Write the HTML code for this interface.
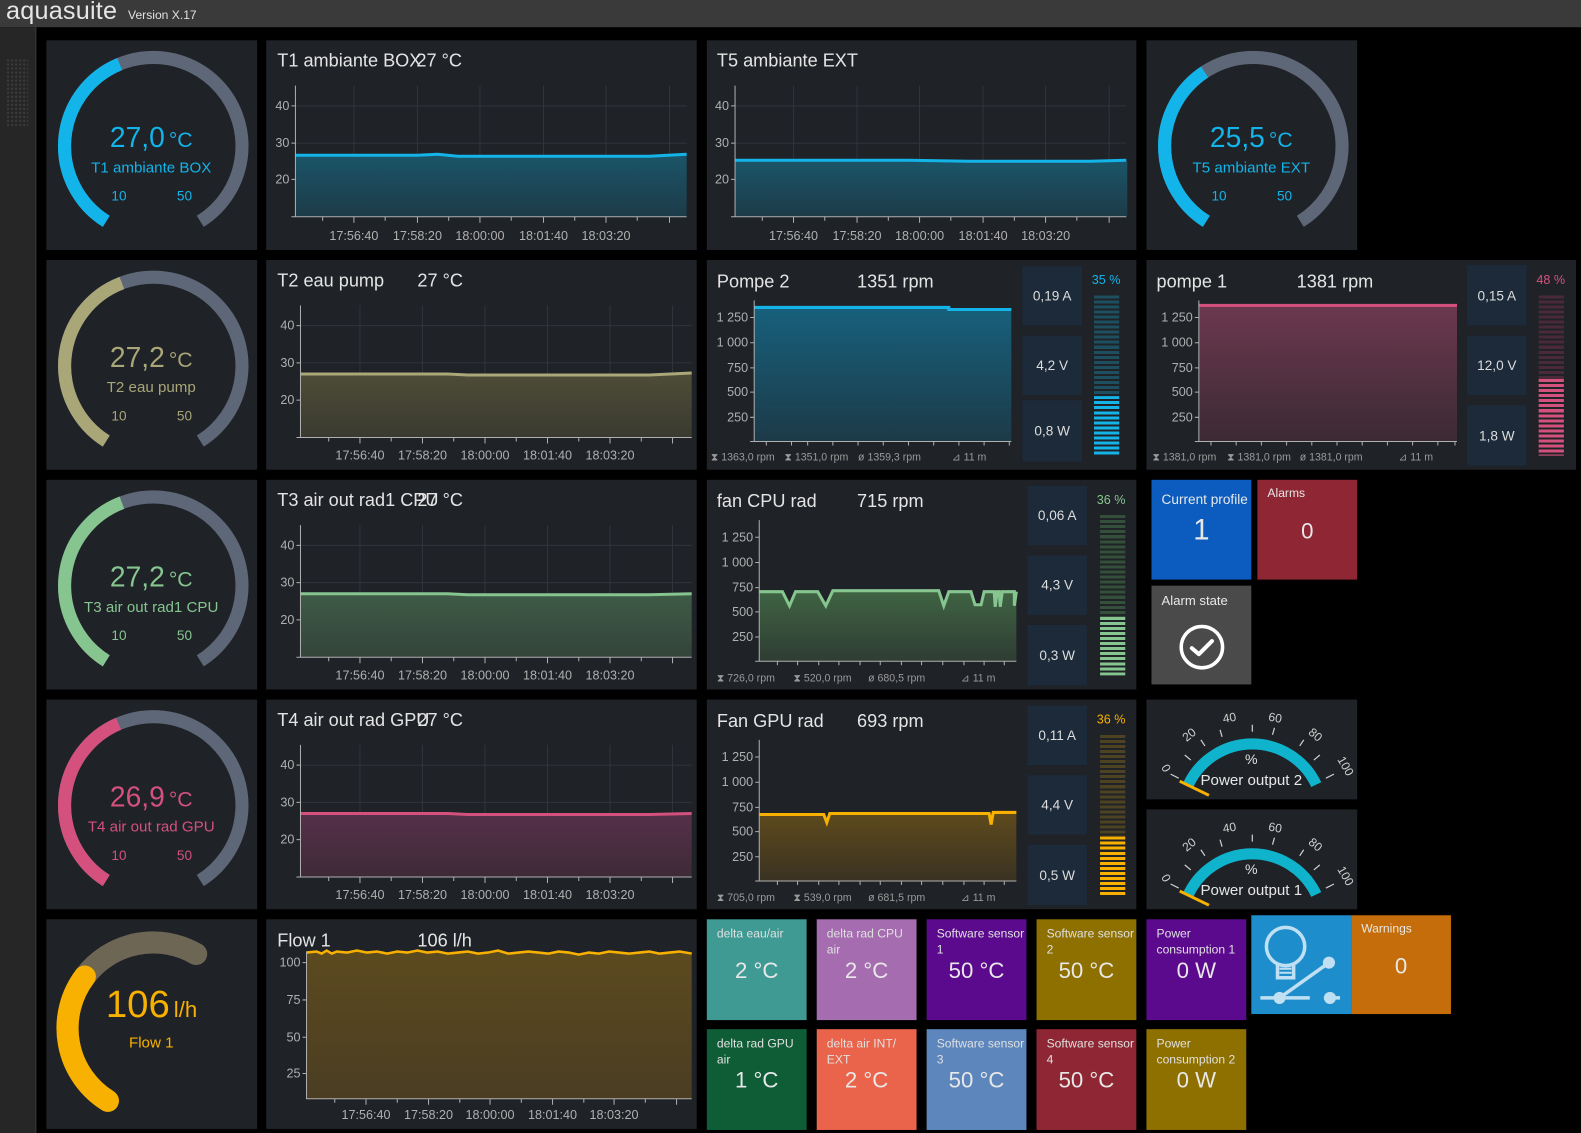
<!DOCTYPE html>
<html><head><meta charset="utf-8"><style>
html,body{margin:0;padding:0;background:#000;width:1581px;height:1133px;overflow:hidden}
body{font-family:"Liberation Sans",sans-serif;}
#w{position:absolute;left:0;top:0;width:1568px;height:1124px;transform:scale(1.0083,1.008);transform-origin:0 0}
.a{position:absolute}
.p{position:absolute;background:#1f2227;overflow:hidden}
svg text{font-family:"Liberation Sans",sans-serif}
.t{fill:#e4e4e4;font-size:18px}
.l{fill:#b0b0b0;font-size:12.5px}
.f{fill:#9a9a9a;font-size:10.5px}
.bx{position:absolute;background:#1c2a3a;color:#ddd;font-size:13.5px;display:flex;align-items:center;justify-content:center}
.tile{position:absolute;color:#e8e8e8;overflow:hidden}
.tile .n{position:absolute;left:10px;top:6px;font-size:12px;line-height:16px;color:#e0e0e0;right:2px}
.tile .v{position:absolute;left:0;right:0;text-align:center;font-size:22px}
</style></head><body>
<div id="w">
<!-- header -->
<div class="a" style="left:0;top:0;width:1568px;height:27px;background:#3a3a3a"></div>
<div class="a" style="left:6px;top:-3px;font-size:25px;color:#e6e6e6;letter-spacing:0.2px">aquasuite</div>
<div class="a" style="left:127px;top:8px;font-size:12px;color:#e0e0e0">Version X.17</div>
<div class="a" style="left:0;top:27px;width:35px;height:1097px;background:#262626;border-right:1px solid #3a3a3a"></div>
<div class="a" style="left:6px;top:58px;width:22px;height:68px;background:radial-gradient(circle,#3a3a3a 1px,transparent 1.4px) 0 0/4px 4px"></div>

<svg width="0" height="0" style="position:absolute"><defs>
<linearGradient id="gb" x1="0" y1="0" x2="0" y2="1"><stop offset="0" stop-color="#1b5569"/><stop offset="1" stop-color="#1c3b48"/></linearGradient>
<linearGradient id="go" x1="0" y1="0" x2="0" y2="1"><stop offset="0" stop-color="#4e4d38"/><stop offset="1" stop-color="#3a3a30"/></linearGradient>
<linearGradient id="gg" x1="0" y1="0" x2="0" y2="1"><stop offset="0" stop-color="#3e5b46"/><stop offset="1" stop-color="#34443a"/></linearGradient>
<linearGradient id="gp" x1="0" y1="0" x2="0" y2="1"><stop offset="0" stop-color="#56304a"/><stop offset="1" stop-color="#3e2a36"/></linearGradient>
<linearGradient id="gy" x1="0" y1="0" x2="0" y2="1"><stop offset="0" stop-color="#5c4a1f"/><stop offset="1" stop-color="#4a3d22"/></linearGradient>
<linearGradient id="gb2" x1="0" y1="0" x2="0" y2="1"><stop offset="0" stop-color="#17607c"/><stop offset="1" stop-color="#1c3a48"/></linearGradient>
<linearGradient id="gp2" x1="0" y1="0" x2="0" y2="1"><stop offset="0" stop-color="#6c384f"/><stop offset="1" stop-color="#3b2a33"/></linearGradient>
<linearGradient id="gg2" x1="0" y1="0" x2="0" y2="1"><stop offset="0" stop-color="#3f6443"/><stop offset="1" stop-color="#2f3d33"/></linearGradient>
<linearGradient id="gy2" x1="0" y1="0" x2="0" y2="1"><stop offset="0" stop-color="#5e4a1c"/><stop offset="1" stop-color="#3a3222"/></linearGradient>
</defs></svg>

<!-- ===== ROW 1 ===== -->
<div class="p" style="left:46px;top:40px;width:209px;height:208px">
<svg width="209" height="208"><path d="M59.4 179.6A88 88 0 1 1 152.6 179.6" fill="none" stroke="#5e6777" stroke-width="13"/><path d="M59.4 179.6A88 88 0 0 1 72.7 23.5" fill="none" stroke="#12b4ea" stroke-width="13"/>
<text x="104" y="106" text-anchor="middle" fill="#12b4ea" font-size="28">27,0<tspan font-size="21" dx="4">°C</tspan></text>
<text x="104" y="131" text-anchor="middle" fill="#12b4ea" font-size="15">T1 ambiante BOX</text>
<text x="72" y="159" text-anchor="middle" fill="#12b4ea" font-size="13.5">10</text><text x="137" y="159" text-anchor="middle" fill="#12b4ea" font-size="13.5">50</text></svg></div>

<div class="p" style="left:264px;top:40px;width:427px;height:208px">
<svg width="427" height="208"><text x="11" y="26" class="t">T1 ambiante BOX</text><text x="149" y="26" class="t">27 °C</text>
<g stroke="#30353b"><path d="M29 65H417M29 102H417M29 138H417M87 45V175M150 45V175M212 45V175M275 45V175M337 45V175M400 45V175"/></g>
<path d="M29 114H150L170 113L190 115H380L417 113V175H29Z" fill="url(#gb)"/><path d="M29 114H150L170 113L190 115H380L417 113" fill="none" stroke="#14b4e8" stroke-width="3"/>
<g stroke="#b0b0b0" fill="none"><path d="M29 45V175H417M25 65H29M25 102H29M25 138H29M25 175H29M56 175V179M87 175V181M118 175V179M150 175V181M181 175V179M212 175V181M243 175V179M275 175V181M306 175V179M337 175V181M368 175V179M400 175V181"/></g>
<g class="l" text-anchor="end"><text x="23" y="69">40</text><text x="23" y="106">30</text><text x="23" y="142">20</text></g>
<g class="l" text-anchor="middle"><text x="87" y="198">17:56:40</text><text x="150" y="198">17:58:20</text><text x="212" y="198">18:00:00</text><text x="275" y="198">18:01:40</text><text x="337" y="198">18:03:20</text></g></svg></div>

<div class="p" style="left:701px;top:40px;width:426px;height:208px">
<svg width="426" height="208"><text x="10" y="26" class="t">T5 ambiante EXT</text>
<g stroke="#30353b"><path d="M28 65H416M28 102H416M28 138H416M86 45V175M149 45V175M211 45V175M274 45V175M336 45V175M399 45V175"/></g>
<path d="M28 119H200L260 120H417V175H28Z" fill="url(#gb)"/><path d="M28 119H200L260 120H380L416 119" fill="none" stroke="#14b4e8" stroke-width="3"/>
<g stroke="#b0b0b0" fill="none"><path d="M28 45V175H416M24 65H28M24 102H28M24 138H28M24 175H28M55 175V179M86 175V181M117 175V179M149 175V181M180 175V179M211 175V181M242 175V179M274 175V181M305 175V179M336 175V181M367 175V179M399 175V181"/></g>
<g class="l" text-anchor="end"><text x="22" y="69">40</text><text x="22" y="106">30</text><text x="22" y="142">20</text></g>
<g class="l" text-anchor="middle"><text x="86" y="198">17:56:40</text><text x="149" y="198">17:58:20</text><text x="211" y="198">18:00:00</text><text x="274" y="198">18:01:40</text><text x="336" y="198">18:03:20</text></g></svg></div>

<div class="p" style="left:1137px;top:40px;width:209px;height:208px">
<svg width="209" height="208"><path d="M59.4 179.6A88 88 0 1 1 152.6 179.6" fill="none" stroke="#5e6777" stroke-width="13"/><path d="M59.4 179.6A88 88 0 0 1 57.7 31.4" fill="none" stroke="#12b4ea" stroke-width="13"/>
<text x="104" y="106" text-anchor="middle" fill="#12b4ea" font-size="28">25,5<tspan font-size="21" dx="4">°C</tspan></text>
<text x="104" y="131" text-anchor="middle" fill="#12b4ea" font-size="15">T5 ambiante EXT</text>
<text x="72" y="159" text-anchor="middle" fill="#12b4ea" font-size="13.5">10</text><text x="137" y="159" text-anchor="middle" fill="#12b4ea" font-size="13.5">50</text></svg></div>

<!-- ===== ROW 2 ===== -->
<div class="p" style="left:46px;top:258px;width:209px;height:208px">
<svg width="209" height="208"><path d="M59.4 179.6A88 88 0 1 1 152.6 179.6" fill="none" stroke="#5e6777" stroke-width="13"/><path d="M59.4 179.6A88 88 0 0 1 74.9 22.7" fill="none" stroke="#a9a678" stroke-width="13"/>
<text x="104" y="106" text-anchor="middle" fill="#a9a678" font-size="28">27,2<tspan font-size="21" dx="4">°C</tspan></text>
<text x="104" y="131" text-anchor="middle" fill="#a9a678" font-size="15">T2 eau pump</text>
<text x="72" y="159" text-anchor="middle" fill="#a9a678" font-size="13.5">10</text><text x="137" y="159" text-anchor="middle" fill="#a9a678" font-size="13.5">50</text></svg></div>

<div class="p" style="left:264px;top:258px;width:427px;height:208px">
<svg width="427" height="208"><text x="11" y="26" class="t">T2 eau pump</text><text x="150" y="26" class="t">27 °C</text>
<g stroke="#30353b"><path d="M34 65H422M34 102H422M34 139H422M93 45V176M155 45V176M217 45V176M279 45V176M341 45V176M403 45V176"/></g>
<path d="M34 113H180L200 114H380L422 112V176H34Z" fill="url(#go)"/><path d="M34 113H180L200 114H380L422 112" fill="none" stroke="#aaa878" stroke-width="3"/>
<g stroke="#b0b0b0" fill="none"><path d="M34 45V176H422M30 65H34M30 102H34M30 139H34M30 176H34M62 176V180M93 176V182M124 176V180M155 176V182M186 176V180M217 176V182M248 176V180M279 176V182M310 176V180M341 176V182M372 176V180M403 176V182"/></g>
<g class="l" text-anchor="end"><text x="28" y="69">40</text><text x="28" y="106">30</text><text x="28" y="143">20</text></g>
<g class="l" text-anchor="middle"><text x="93" y="198">17:56:40</text><text x="155" y="198">17:58:20</text><text x="217" y="198">18:00:00</text><text x="279" y="198">18:01:40</text><text x="341" y="198">18:03:20</text></g></svg></div>

<div class="p" style="left:701px;top:258px;width:426px;height:208px">
<svg width="426" height="208"><text x="10" y="27" class="t">Pompe 2</text><text x="149" y="27" class="t">1351 rpm</text>
<path d="M47 47H240V49H302V180H47Z" fill="url(#gb2)"/><path d="M47 47H240V49H302" fill="none" stroke="#14b4e8" stroke-width="3"/>
<g stroke="#b0b0b0" fill="none"><path d="M47 40V180H302M43 57H47M43 82H47M43 107H47M43 131H47M43 156H47M43 180H47M59 180V184M84 180V184M100 180V184M125 180V184M150 180V184M175 180V184M200 180V184M225 180V184M250 180V184M275 180V184M300 180V184"/></g>
<g class="l" text-anchor="end"><text x="41" y="61">1 250</text><text x="41" y="86">1 000</text><text x="41" y="111">750</text><text x="41" y="135">500</text><text x="41" y="160">250</text></g>
<g class="f"><text x="4" y="199">⧗ 1363,0 rpm</text><text x="77" y="199">⧗ 1351,0 rpm</text><text x="150" y="199">ø 1359,3 rpm</text><text x="243" y="199">⊿ 11 m</text></g>
<text x="396" y="24" fill="#12b4ea" font-size="12.5" text-anchor="middle">35 %</text></svg>
<div class="bx" style="left:313px;top:6px;width:59px;height:59px">0,19 A</div>
<div class="bx" style="left:313px;top:75px;width:59px;height:59px">4,2 V</div>
<div class="bx" style="left:313px;top:139px;width:59px;height:61px">0,8 W</div>
<div class="a" style="left:384px;top:35px;width:25px;height:100px;background:repeating-linear-gradient(#1e4f60 0 3px,transparent 3px 5px)"></div>
<div class="a" style="left:384px;top:135px;width:25px;height:59px;background:repeating-linear-gradient(#14b4e8 0 3px,transparent 3px 5px)"></div>
</div>

<div class="p" style="left:1137px;top:258px;width:426px;height:208px">
<svg width="426" height="208"><text x="10" y="27" class="t">pompe 1</text><text x="149" y="27" class="t">1381 rpm</text>
<path d="M52 45H308V180H52Z" fill="url(#gp2)"/><path d="M52 45H308" fill="none" stroke="#d4517d" stroke-width="3"/>
<g stroke="#b0b0b0" fill="none"><path d="M52 40V180H308M48 57H52M48 82H52M48 107H52M48 131H52M48 156H52M48 180H52M64 180V184M89 180V184M114 180V184M139 180V184M164 180V184M189 180V184M214 180V184M239 180V184M264 180V184M289 180V184M306 180V184"/></g>
<g class="l" text-anchor="end"><text x="46" y="61">1 250</text><text x="46" y="86">1 000</text><text x="46" y="111">750</text><text x="46" y="135">500</text><text x="46" y="160">250</text></g>
<g class="f"><text x="6" y="199">⧗ 1381,0 rpm</text><text x="80" y="199">⧗ 1381,0 rpm</text><text x="152" y="199">ø 1381,0 rpm</text><text x="250" y="199">⊿ 11 m</text></g>
<text x="401" y="24" fill="#d4517d" font-size="12.5" text-anchor="middle">48 %</text></svg>
<div class="bx" style="left:318px;top:5px;width:59px;height:60px">0,15 A</div>
<div class="bx" style="left:318px;top:75px;width:59px;height:59px">12,0 V</div>
<div class="bx" style="left:318px;top:144px;width:59px;height:60px">1,8 W</div>
<div class="a" style="left:389px;top:35px;width:25px;height:83px;background:repeating-linear-gradient(#4a2a38 0 3px,transparent 3px 5px)"></div>
<div class="a" style="left:389px;top:118px;width:25px;height:76px;background:repeating-linear-gradient(#d4517d 0 3px,transparent 3px 5px)"></div>
</div>

<!-- ===== ROW 3 ===== -->
<div class="p" style="left:46px;top:476px;width:209px;height:208px">
<svg width="209" height="208"><path d="M59.4 179.6A88 88 0 1 1 152.6 179.6" fill="none" stroke="#5e6777" stroke-width="13"/><path d="M59.4 179.6A88 88 0 0 1 74.9 22.7" fill="none" stroke="#86c58f" stroke-width="13"/>
<text x="104" y="106" text-anchor="middle" fill="#86c58f" font-size="28">27,2<tspan font-size="21" dx="4">°C</tspan></text>
<text x="104" y="131" text-anchor="middle" fill="#86c58f" font-size="15">T3 air out rad1 CPU</text>
<text x="72" y="159" text-anchor="middle" fill="#86c58f" font-size="13.5">10</text><text x="137" y="159" text-anchor="middle" fill="#86c58f" font-size="13.5">50</text></svg></div>

<div class="p" style="left:264px;top:476px;width:427px;height:208px">
<svg width="427" height="208"><text x="11" y="26" class="t">T3 air out rad1 CPU</text><text x="150" y="26" class="t">27 °C</text>
<g stroke="#30353b"><path d="M34 65H422M34 102H422M34 139H422M93 45V176M155 45V176M217 45V176M279 45V176M341 45V176M403 45V176"/></g>
<path d="M34 113H180L200 114H380L422 113V176H34Z" fill="url(#gg)"/><path d="M34 113H180L200 114H380L422 113" fill="none" stroke="#86c58f" stroke-width="3"/>
<g stroke="#b0b0b0" fill="none"><path d="M34 45V176H422M30 65H34M30 102H34M30 139H34M30 176H34M62 176V180M93 176V182M124 176V180M155 176V182M186 176V180M217 176V182M248 176V180M279 176V182M310 176V180M341 176V182M372 176V180M403 176V182"/></g>
<g class="l" text-anchor="end"><text x="28" y="69">40</text><text x="28" y="106">30</text><text x="28" y="143">20</text></g>
<g class="l" text-anchor="middle"><text x="93" y="198">17:56:40</text><text x="155" y="198">17:58:20</text><text x="217" y="198">18:00:00</text><text x="279" y="198">18:01:40</text><text x="341" y="198">18:03:20</text></g></svg></div>

<div class="p" style="left:701px;top:476px;width:426px;height:208px">
<svg width="426" height="208"><text x="10" y="27" class="t">fan CPU rad</text><text x="149" y="27" class="t">715 rpm</text>
<path d="M52 111H75L82 125L88 111H110L118 125L125 110H230L235 125L240 111H262L266 124H272L275 111H285L286 126L288 111H290L291 126L293 111H305L305 125L307 111V180H52Z" fill="url(#gg2)"/>
<path d="M52 111H75L82 125L88 111H110L118 125L125 110H230L235 125L240 111H262L266 124H272L275 111H285L286 126L288 111H290L291 126L293 111H305L305 125L307 111" fill="none" stroke="#86c58f" stroke-width="3"/>
<g stroke="#b0b0b0" fill="none"><path d="M52 40V180H307M48 57H52M48 82H52M48 107H52M48 131H52M48 156H52M48 180H52M70 180V184M90 180V184M111 180V184M131 180V184M152 180V184M172 180V184M193 180V184M213 180V184M234 180V184M255 180V184M275 180V184M295 180V184"/></g>
<g class="l" text-anchor="end"><text x="46" y="61">1 250</text><text x="46" y="86">1 000</text><text x="46" y="111">750</text><text x="46" y="135">500</text><text x="46" y="160">250</text></g>
<g class="f"><text x="10" y="200">⧗ 726,0 rpm</text><text x="86" y="200">⧗ 520,0 rpm</text><text x="160" y="200">ø 680,5 rpm</text><text x="252" y="200">⊿ 11 m</text></g>
<text x="401" y="24" fill="#86c58f" font-size="12.5" text-anchor="middle">36 %</text></svg>
<div class="bx" style="left:318px;top:6px;width:59px;height:59px">0,06 A</div>
<div class="bx" style="left:318px;top:75px;width:59px;height:59px">4,3 V</div>
<div class="bx" style="left:318px;top:144px;width:59px;height:60px">0,3 W</div>
<div class="a" style="left:390px;top:35px;width:25px;height:101px;background:repeating-linear-gradient(#35503a 0 3px,transparent 3px 5px)"></div>
<div class="a" style="left:390px;top:136px;width:25px;height:58px;background:repeating-linear-gradient(#86c58f 0 3px,transparent 3px 5px)"></div>
</div>

<div class="tile" style="left:1142px;top:476px;width:99px;height:99px;background:#0b5cbe"><div class="a" style="left:10px;top:12px;font-size:13.5px">Current profile</div><div class="v" style="top:34px;font-size:29px">1</div></div>
<div class="tile" style="left:1247px;top:476px;width:99px;height:99px;background:#8e2633"><div class="a" style="left:10px;top:6px;font-size:12px">Alarms</div><div class="v" style="top:38px;font-size:22px">0</div></div>
<div class="tile" style="left:1142px;top:581px;width:99px;height:98px;background:#4a4a4a"><div class="a" style="left:10px;top:7px;font-size:13px">Alarm state</div>
<svg class="a" style="left:25px;top:36px" width="50" height="50"><circle cx="25" cy="25" r="20.5" fill="none" stroke="#fff" stroke-width="3.5"/><path d="M15 26L22 32L35 19" fill="none" stroke="#fff" stroke-width="4" stroke-linecap="round" stroke-linejoin="round"/></svg></div>

<!-- ===== ROW 4 ===== -->
<div class="p" style="left:46px;top:694px;width:209px;height:208px">
<svg width="209" height="208"><path d="M59.4 179.6A88 88 0 1 1 152.6 179.6" fill="none" stroke="#5e6777" stroke-width="13"/><path d="M59.4 179.6A88 88 0 0 1 71.6 24" fill="none" stroke="#d4517d" stroke-width="13"/>
<text x="104" y="106" text-anchor="middle" fill="#d4517d" font-size="28">26,9<tspan font-size="21" dx="4">°C</tspan></text>
<text x="104" y="131" text-anchor="middle" fill="#d4517d" font-size="15">T4 air out rad GPU</text>
<text x="72" y="159" text-anchor="middle" fill="#d4517d" font-size="13.5">10</text><text x="137" y="159" text-anchor="middle" fill="#d4517d" font-size="13.5">50</text></svg></div>

<div class="p" style="left:264px;top:694px;width:427px;height:208px">
<svg width="427" height="208"><text x="11" y="26" class="t">T4 air out rad GPU</text><text x="150" y="26" class="t">27 °C</text>
<g stroke="#30353b"><path d="M34 65H422M34 102H422M34 139H422M93 45V176M155 45V176M217 45V176M279 45V176M341 45V176M403 45V176"/></g>
<path d="M34 113H180L200 114H380L422 113V176H34Z" fill="url(#gp)"/><path d="M34 113H180L200 114H380L422 113" fill="none" stroke="#d4517d" stroke-width="3"/>
<g stroke="#b0b0b0" fill="none"><path d="M34 45V176H422M30 65H34M30 102H34M30 139H34M30 176H34M62 176V180M93 176V182M124 176V180M155 176V182M186 176V180M217 176V182M248 176V180M279 176V182M310 176V180M341 176V182M372 176V180M403 176V182"/></g>
<g class="l" text-anchor="end"><text x="28" y="69">40</text><text x="28" y="106">30</text><text x="28" y="143">20</text></g>
<g class="l" text-anchor="middle"><text x="93" y="198">17:56:40</text><text x="155" y="198">17:58:20</text><text x="217" y="198">18:00:00</text><text x="279" y="198">18:01:40</text><text x="341" y="198">18:03:20</text></g></svg></div>

<div class="p" style="left:701px;top:694px;width:426px;height:208px">
<svg width="426" height="208"><text x="10" y="27" class="t">Fan GPU rad</text><text x="149" y="27" class="t">693 rpm</text>
<path d="M52 114H116L119 122L122 113H280L282 124L284 112H307V180H52Z" fill="url(#gy2)"/>
<path d="M52 114H116L119 122L122 113H280L282 124L284 112H307" fill="none" stroke="#f8b100" stroke-width="3"/>
<g stroke="#b0b0b0" fill="none"><path d="M52 40V180H307M48 57H52M48 82H52M48 107H52M48 131H52M48 156H52M48 180H52M70 180V184M90 180V184M111 180V184M131 180V184M152 180V184M172 180V184M193 180V184M213 180V184M234 180V184M255 180V184M275 180V184M295 180V184"/></g>
<g class="l" text-anchor="end"><text x="46" y="61">1 250</text><text x="46" y="86">1 000</text><text x="46" y="111">750</text><text x="46" y="135">500</text><text x="46" y="160">250</text></g>
<g class="f"><text x="10" y="200">⧗ 705,0 rpm</text><text x="86" y="200">⧗ 539,0 rpm</text><text x="160" y="200">ø 681,5 rpm</text><text x="252" y="200">⊿ 11 m</text></g>
<text x="401" y="24" fill="#f8b100" font-size="12.5" text-anchor="middle">36 %</text></svg>
<div class="bx" style="left:318px;top:6px;width:59px;height:59px">0,11 A</div>
<div class="bx" style="left:318px;top:75px;width:59px;height:59px">4,4 V</div>
<div class="bx" style="left:318px;top:144px;width:59px;height:60px">0,5 W</div>
<div class="a" style="left:390px;top:35px;width:25px;height:101px;background:repeating-linear-gradient(#4d4222 0 3px,transparent 3px 5px)"></div>
<div class="a" style="left:390px;top:136px;width:25px;height:58px;background:repeating-linear-gradient(#f8b100 0 3px,transparent 3px 5px)"></div>
</div>

<!-- power output gauges -->
<div class="p" style="left:1137px;top:694px;width:209px;height:99px">
<svg width="209" height="99"><path d="M41.6 84.4A70 70 0 0 1 168.4 84.4" fill="none" stroke="#0fb3cc" stroke-width="11"/>
<g stroke="#cfcfcf" stroke-width="1.2"><path d="M24 74L32 78M38 55L44 60M54 40L58 46M73 30L75 37M105 25V32M127 28L125 35M156 40L152 46M172 55L166 60M186 74L178 78"/></g>
<path d="M33 81L62 95" stroke="#f8b100" stroke-width="3"/>
<g fill="#cfcfcf" font-size="12" text-anchor="middle"><text x="16" y="70" transform="rotate(60 16 70)">0</text><text x="45" y="38" transform="rotate(-40 45 38)">20</text><text x="83" y="22" transform="rotate(-10 83 22)">40</text><text x="127" y="22" transform="rotate(10 127 22)">60</text><text x="165" y="38" transform="rotate(40 165 38)">80</text><text x="194" y="68" transform="rotate(60 194 68)">100</text></g>
<text x="104" y="64" fill="#e0e0e0" font-size="14" text-anchor="middle">%</text>
<text x="104" y="85" fill="#e6e6e6" font-size="15" text-anchor="middle">Power output 2</text></svg></div>
<div class="p" style="left:1137px;top:803px;width:209px;height:99px">
<svg width="209" height="99"><path d="M41.6 84.4A70 70 0 0 1 168.4 84.4" fill="none" stroke="#0fb3cc" stroke-width="11"/>
<g stroke="#cfcfcf" stroke-width="1.2"><path d="M24 74L32 78M38 55L44 60M54 40L58 46M73 30L75 37M105 25V32M127 28L125 35M156 40L152 46M172 55L166 60M186 74L178 78"/></g>
<path d="M33 81L62 95" stroke="#f8b100" stroke-width="3"/>
<g fill="#cfcfcf" font-size="12" text-anchor="middle"><text x="16" y="70" transform="rotate(60 16 70)">0</text><text x="45" y="38" transform="rotate(-40 45 38)">20</text><text x="83" y="22" transform="rotate(-10 83 22)">40</text><text x="127" y="22" transform="rotate(10 127 22)">60</text><text x="165" y="38" transform="rotate(40 165 38)">80</text><text x="194" y="68" transform="rotate(60 194 68)">100</text></g>
<text x="104" y="64" fill="#e0e0e0" font-size="14" text-anchor="middle">%</text>
<text x="104" y="85" fill="#e6e6e6" font-size="15" text-anchor="middle">Power output 1</text></svg></div>

<!-- ===== ROW 5 ===== -->
<div class="p" style="left:46px;top:912px;width:209px;height:208px">
<svg width="209" height="208"><path d="M38.1 56.8A85 85 0 0 1 148.5 34.4" fill="none" stroke="#6d6655" stroke-width="22" stroke-linecap="round"/><path d="M61 180.1A85 85 0 0 1 38.1 56.8" fill="none" stroke="#f8b100" stroke-width="22" stroke-linecap="round"/>
<text x="59" y="97" fill="#f8b100" font-size="38">106<tspan font-size="22" dx="4">l/h</tspan></text>
<text x="104" y="127" text-anchor="middle" fill="#f8b100" font-size="15">Flow 1</text></svg></div>

<div class="p" style="left:264px;top:912px;width:427px;height:208px">
<svg width="427" height="208"><text x="11" y="27" class="t">Flow 1</text><text x="150" y="27" class="t">106 l/h</text>
<g stroke="#3a3a33"><path d="M40 43H422M40 80H422M40 117H422M40 153H422M99 32V178M161 32V178M222 32V178M284 32V178M345 32V178M407 32V178"/></g>
<path d="M40 33L50 32L55 34L60 31L65 34L70 32L80 33L90 31L100 33L110 32L120 34L130 32L140 33L150 31L160 33L170 32L180 34L190 33L200 32L210 34L220 33L230 31L240 34L250 33L260 32L270 33L280 34L290 32L300 33L310 35L320 33L330 34L340 32L350 33L360 34L370 33L380 32L390 34L400 33L410 32L422 34V178H40Z" fill="url(#gy)"/>
<path d="M40 33L50 32L55 34L60 31L65 34L70 32L80 33L90 31L100 33L110 32L120 34L130 32L140 33L150 31L160 33L170 32L180 34L190 33L200 32L210 34L220 33L230 31L240 34L250 33L260 32L270 33L280 34L290 32L300 33L310 35L320 33L330 34L340 32L350 33L360 34L370 33L380 32L390 34L400 33L410 32L422 34" fill="none" stroke="#f8b100" stroke-width="2.5"/>
<g stroke="#b0b0b0" fill="none"><path d="M40 32V178H422M36 43H40M36 80H40M36 117H40M36 153H40M68 178V182M99 178V184M130 178V182M161 178V184M192 178V182M222 178V184M253 178V182M284 178V184M315 178V182M345 178V184M376 178V182M407 178V184"/></g>
<g class="l" text-anchor="end"><text x="34" y="47">100</text><text x="34" y="84">75</text><text x="34" y="121">50</text><text x="34" y="157">25</text></g>
<g class="l" text-anchor="middle"><text x="99" y="198">17:56:40</text><text x="161" y="198">17:58:20</text><text x="222" y="198">18:00:00</text><text x="284" y="198">18:01:40</text><text x="345" y="198">18:03:20</text></g></svg></div>

<!-- tiles -->
<div class="tile" style="left:701px;top:912px;width:99px;height:100px;background:#3f9a94"><div class="n">delta eau/air</div><div class="v" style="top:38px">2 °C</div></div>
<div class="tile" style="left:810px;top:912px;width:99px;height:100px;background:#a56cb0"><div class="n">delta rad CPU air</div><div class="v" style="top:38px">2 °C</div></div>
<div class="tile" style="left:919px;top:912px;width:99px;height:100px;background:#5b0a8e"><div class="n">Software sensor 1</div><div class="v" style="top:38px">50 °C</div></div>
<div class="tile" style="left:1028px;top:912px;width:99px;height:100px;background:#8d7000"><div class="n">Software sensor 2</div><div class="v" style="top:38px">50 °C</div></div>
<div class="tile" style="left:1137px;top:912px;width:99px;height:100px;background:#5b0a8e"><div class="n">Power consumption 1</div><div class="v" style="top:38px">0 W</div></div>
<div class="tile" style="left:1241px;top:908px;width:99px;height:98px;background:#1e8dcb">
<svg class="a" style="left:0;top:0" width="99" height="98"><g fill="none" stroke="#bfe0f2" stroke-width="3.5"><circle cx="34" cy="31" r="19"/><path d="M26 49V62H42V49"/><path d="M28 53H40M28 57H40" stroke-width="2"/><path d="M9 82H58M28 82L77 47M72 82H88"/></g><g fill="#bfe0f2"><circle cx="28" cy="82" r="6"/><circle cx="77" cy="47" r="6"/><circle cx="78" cy="82" r="6"/></g></svg></div>
<div class="tile" style="left:1340px;top:908px;width:99px;height:98px;background:#c46d0a"><div class="a" style="left:10px;top:6px;font-size:12px">Warnings</div><div class="v" style="top:38px">0</div></div>

<div class="tile" style="left:701px;top:1021px;width:99px;height:100px;background:#0f5d37"><div class="n">delta rad GPU air</div><div class="v" style="top:38px">1 °C</div></div>
<div class="tile" style="left:810px;top:1021px;width:99px;height:100px;background:#ea644b"><div class="n">delta air INT/ EXT</div><div class="v" style="top:38px">2 °C</div></div>
<div class="tile" style="left:919px;top:1021px;width:99px;height:100px;background:#5c86bc"><div class="n">Software sensor 3</div><div class="v" style="top:38px">50 °C</div></div>
<div class="tile" style="left:1028px;top:1021px;width:99px;height:100px;background:#8f2633"><div class="n">Software sensor 4</div><div class="v" style="top:38px">50 °C</div></div>
<div class="tile" style="left:1137px;top:1021px;width:99px;height:100px;background:#8d7000"><div class="n">Power consumption 2</div><div class="v" style="top:38px">0 W</div></div>
</div>
</body></html>
